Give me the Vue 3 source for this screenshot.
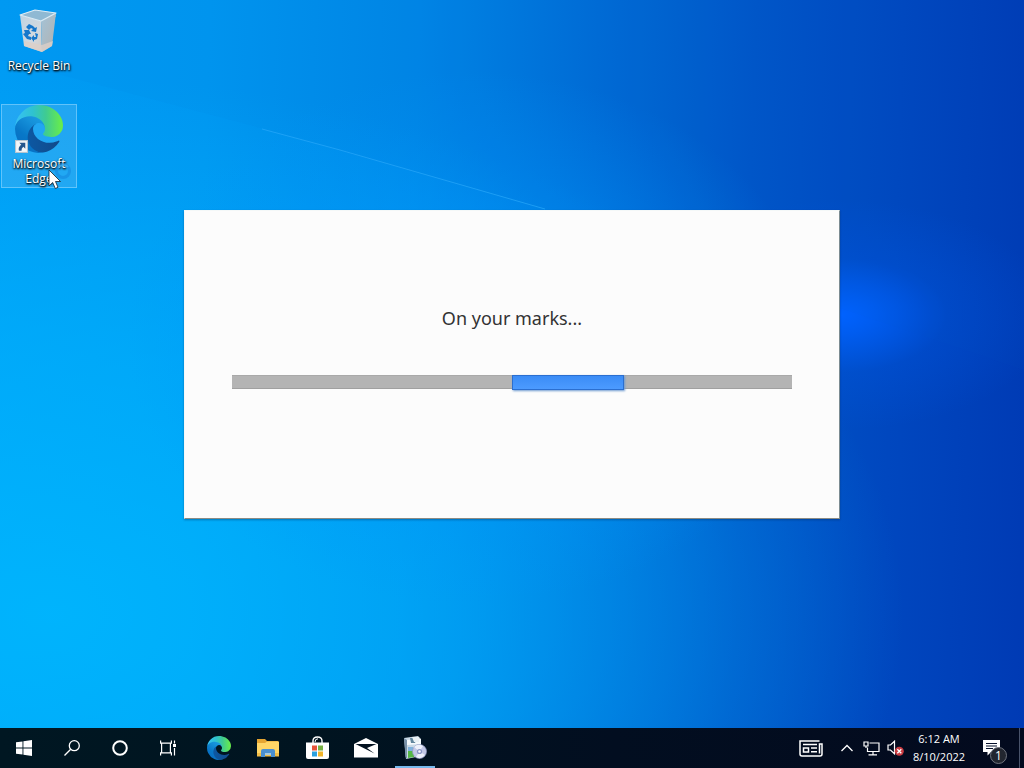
<script setup>
import { ref } from 'vue'

const message = ref('On your marks...')
const offset = ref(50)
</script>

<template>
  <div class="desktop">
    <svg class="beam" viewBox="0 0 1024 768" preserveAspectRatio="none" aria-hidden="true">
      <path class="shade" d="M80 80 L264 129 L545 209 L1024 370 V0 H0 V60 Z" />
      <path class="ray" d="M262 129 L340 150 L545 209" />
    </svg>

    <main class="workspace">
      <nav class="shortcuts" aria-label="Desktop">
        <button class="shortcut" type="button">
          <svg class="pic" viewBox="0 0 48 48" aria-hidden="true">
            <defs>
              <linearGradient id="bin-front" x1="0" y1="0" x2="1" y2="1">
                <stop offset="0" stop-color="#bdd3e2" /><stop offset=".6" stop-color="#d3d9df" /><stop offset="1" stop-color="#cfcac6" />
              </linearGradient>
              <linearGradient id="bin-side" x1="0" y1="0" x2="1" y2="1">
                <stop offset="0" stop-color="#a3c3d8" /><stop offset="1" stop-color="#b3b2b0" />
              </linearGradient>
            </defs>
            <path d="M5 8 L20 3 L41 6 L41 10 L26 14 Z" fill="#75b5dc" />
            <path d="M5 8 L26 14 L27 45 L9 39 Z" fill="url(#bin-front)" />
            <path d="M26 14 L41 6 L37 39 L27 45 Z" fill="url(#bin-side)" />
            <path d="M5 8 L20 3 L41 6 L26 14 Z" fill="#8fb9d3" stroke="#dcecf5" stroke-width="1.2" stroke-linejoin="round" />
            <path d="M9 34 L27 38 L38 34 L37 39 L27 45 L9 39 Z" fill="#dcd0c8" opacity=".8" />
            <g fill="#1677cb">
              <path d="M11 20 L14 17 L18 19 L20 21 L22 20 L21 25 L16 24 L18 22 L16 21 L14 23 Z" />
              <path d="M9 23 L14 23 L16 27 L14 27 L13 29 L16 30 V33 L12 32 L8 27 L10 26 Z" />
              <path d="M20 26 L23 27 L22 32 L19 33 V35 L16 31 L19 28 V30 L21 30 Z" />
            </g>
          </svg>
          <span class="label">Recycle Bin</span>
        </button>
        <button class="shortcut selected" type="button">
          <span class="pic-wrap">
            <svg class="pic" viewBox="0 0 256 256" aria-hidden="true">
              <defs>
                <linearGradient id="edge-deep" x1="63" y1="177" x2="241" y2="177" gradientUnits="userSpaceOnUse">
                  <stop offset="0" stop-color="#0c59a4" /><stop offset="1" stop-color="#114a8b" />
                </linearGradient>
                <linearGradient id="edge-mid" x1="157" y1="80" x2="46" y2="226" gradientUnits="userSpaceOnUse">
                  <stop offset="0" stop-color="#1b9de2" /><stop offset=".3" stop-color="#1590d9" /><stop offset=".7" stop-color="#0878c8" /><stop offset="1" stop-color="#0870c4" />
                </linearGradient>
                <linearGradient id="edge-top" x1="20" y1="90" x2="250" y2="90" gradientUnits="userSpaceOnUse">
                  <stop offset="0" stop-color="#35c1f1" /><stop offset=".35" stop-color="#2fc2cf" /><stop offset=".65" stop-color="#3fcb91" /><stop offset="1" stop-color="#66eb4e" />
                </linearGradient>
                <symbol id="edge" viewBox="0 0 256 256">
                  <g transform="translate(-4.63 -4.92)">
                    <path fill="url(#edge-deep)" d="M235.68 195.46a93.73 93.73 0 01-10.54 4.71 101.87 101.87 0 01-35.9 6.46c-47.32 0-88.54-32.55-88.54-74.32A31.48 31.48 0 01117.13 105c-42.8 1.8-53.8 46.4-53.8 72.53 0 73.88 68.09 81.37 82.76 81.37 7.91 0 19.84-2.3 27-4.56l1.31-.44a128.34 128.34 0 0066.6-52.8 4 4 0 00-5.32-5.64z" />
                    <path fill="url(#edge-mid)" d="M110.34 246.34A79.2 79.2 0 0187.6 225a80.72 80.72 0 0129.53-120c3.12-1.47 8.45-4.13 15.54-4a32.35 32.35 0 0125.69 13 31.88 31.88 0 016.36 18.66c0-.21 24.46-79.6-80-79.6-43.9 0-80 41.66-80 78.21a130.15 130.15 0 0012.11 56 128 128 0 00156.38 67.11 75.55 75.55 0 01-62.78-8z" />
                    <path fill="url(#edge-top)" d="M156.94 153.78c-.81 1.05-3.3 2.5-3.3 5.66 0 2.61 1.7 5.12 4.72 7.23 14.38 10 41.49 8.68 41.56 8.68a59.56 59.56 0 0030.27-8.35A61.38 61.38 0 00260.62 114c.26-22.41-8-37.31-11.34-43.91C228.09 28.76 182.35 4.92 132.61 4.92a128 128 0 00-128 126.2c.48-36.54 36.8-66.05 80-66.05 3.5 0 23.46.34 42 10.07 16.34 8.58 24.9 18.94 30.85 29.21 6.18 10.67 7.28 24.15 7.28 29.52s-2.74 13.33-7.8 19.91z" />
                  </g>
                </symbol>
              </defs>
              <use href="#edge" />
            </svg>
            <svg class="link-mark" viewBox="0 0 12 12" aria-hidden="true">
              <rect x=".5" y=".5" width="11" height="11" fill="#f4f6f8" stroke="#b5c4d0" />
              <path d="M4 2.5 H9.5 V8 L7.7 6.3 Q5.8 7.5 6 10 H3.6 Q2.6 6.5 5.8 4.3 Z" fill="#24558c" />
            </svg>
          </span>
          <span class="label">Microsoft Edge</span>
        </button>
      </nav>

      <section class="splash" role="dialog" aria-labelledby="status">
        <p id="status" class="status">{{ message }}</p>
        <div class="track" role="progressbar" aria-labelledby="status">
          <div class="chunk" :style="{ marginLeft: offset + '%' }"></div>
        </div>
      </section>
    </main>

    <footer class="taskbar">
      <button class="task" type="button" aria-label="Start">
        <svg width="16" height="16" viewBox="0 0 16 16" fill="#fff"><path d="M0 2.3 L6.5 1.4 V7.5 H0Z M7.4 1.2 L16 0 V7.5 H7.4Z M0 8.4 H6.5 V14.6 L0 13.7Z M7.4 8.4 H16 V16 L7.4 14.8Z" /></svg>
      </button>
      <button class="task" type="button" aria-label="Search">
        <svg width="16" height="16" viewBox="0 0 16 16" fill="none" stroke="#fff" stroke-width="1.3"><circle cx="10.3" cy="5.7" r="5" /><path d="M6.7 9.3 L.5 15.5" /></svg>
      </button>
      <button class="task" type="button" aria-label="Cortana">
        <svg width="16" height="16" viewBox="0 0 16 16" fill="none" stroke="#fff" stroke-width="2"><circle cx="8" cy="8" r="6.8" /></svg>
      </button>
      <button class="task" type="button" aria-label="Task View">
        <svg width="16" height="16" viewBox="0 0 16 16" fill="none" stroke="#fff" stroke-width="1.2"><path d="M.6 .5 V3.2 H11.4 V.5 M.6 15.5 V12.8 H11.4 V15.5 M1.6 3.2 V12.8 M10.4 3.2 V12.8 M14.5 .5 V3.5 M14.5 8 V15.5" /><path d="M13 4 H16 V7 H13Z" fill="#fff" stroke="none" /></svg>
      </button>
      <div class="pinned">
        <button class="task" type="button" aria-label="Microsoft Edge">
          <svg width="24" height="24" viewBox="0 0 256 256"><use href="#edge" /></svg>
        </button>
        <button class="task" type="button" aria-label="File Explorer">
          <svg width="22" height="18" viewBox="0 0 22 18"><path d="M0 0 H8 L10 2 H21 V17 H0Z" fill="#e5a532" /><path d="M0 4 H8 L10 2.5 H22 V17 H0Z" fill="#ffd566" /><path d="M0 14 H22 V17.5 H0Z" fill="#f3bd47" /><path d="M4 18 V12 Q4 10 6 10 H16 Q18 10 18 12 V18 H14 V14 H8 V18Z" fill="#4a8fd0" /><path d="M8 14 H14 V16 H8Z" fill="#a7c9dd" /></svg>
        </button>
        <button class="task" type="button" aria-label="Microsoft Store">
          <svg width="23" height="24" viewBox="0 0 23 24"><path d="M7 7 V5 Q7 1 11.5 1 Q16 1 16 5 V7" fill="none" stroke="#fff" stroke-width="1.4" /><path d="M9 6 Q9 2.8 12 2.8" fill="none" stroke="#fff" /><path d="M0 6.5 H23 V21 Q23 23 21 23 H2 Q0 23 0 21Z" fill="#fff" /><path d="M6 9.5 H11 V14.5 H6Z" fill="#e5533a" /><path d="M12 9.5 H17 V14.5 H12Z" fill="#76b043" /><path d="M6 15.5 H11 V20.5 H6Z" fill="#2ba0de" /><path d="M12 15.5 H17 V20.5 H12Z" fill="#f2b52a" /></svg>
        </button>
        <button class="task" type="button" aria-label="Mail">
          <svg width="24" height="20" viewBox="0 0 24 20"><path d="M0 6 L12 0 L24 6 V19.5 H0Z" fill="#fff" /><path d="M1.5 6 H22.5 L13 10 L20.5 15.5 Z" fill="#02111f" /></svg>
        </button>
        <button class="task active" type="button" aria-label="Setup">
          <svg width="24" height="24" viewBox="0 0 24 24"><path d="M1 2 L15 0 L18 3 V20 L3 23 Z" fill="#cad9e6" /><path d="M1 2 L4 4 V23 L2.5 21 Z" fill="#7992a9" /><path d="M4 4 L18 3 V8 L4 9Z" fill="#f5f9fc" /><path d="M7 2 H14 L12 7 H8Z" fill="#62869d" /><path d="M9 1 H16 V6 H11Z" fill="#e8f0f5" /><path d="M5 11 H10 V15 H5Z" fill="#7fb2dd" /><path d="M5 15 H11 V21 L5 22Z" fill="#55b746" /><circle cx="16.5" cy="15.5" r="7" fill="#c3c8e6" stroke="#8e97c0" stroke-width=".7" /><path d="M16.5 15.5 L11 11 Q15 7 20 10Z M16.5 15.5 L22 19 Q18 24 13 21Z" fill="#edf0fb" /><circle cx="16.5" cy="15.5" r="2.6" fill="#8995c5" /><circle cx="16.5" cy="15.5" r="1.3" fill="#f7f8ff" /></svg>
        </button>
      </div>

      <div class="tray">
        <button class="news" type="button" aria-label="News and interests">
          <svg width="24" height="17" viewBox="0 0 24 17" fill="none" stroke="#fff" stroke-width="1.5"><path d="M20.5 1 H1 V14 Q1 16 3 16 H21 Q23 16 23 14 V4 H20.5 V13.5" /><path d="M4 4.5 H18 M12 8 H18 M12 11.8 H18 M4.5 8 H9.5 V12 H4.5Z" /></svg>
        </button>
        <button class="small" type="button" aria-label="Show hidden icons">
          <svg width="12" height="8" viewBox="0 0 12 8" fill="none" stroke="#fff" stroke-width="1.3"><path d="M.5 7 L6 1.5 L11.5 7" /></svg>
        </button>
        <button class="small" type="button" aria-label="Network">
          <svg width="17" height="15" viewBox="0 0 17 15" fill="none" stroke="#fff" stroke-width="1.2"><path d="M6.5 2 H16 V10.5 H4.5 V6.5 M10 10.5 V13.5 M5.5 13.8 H14" /><path d="M1 1 H5 V5 H1Z M3 5 V7" /></svg>
        </button>
        <button class="small" type="button" aria-label="Volume muted">
          <svg width="17" height="16" viewBox="0 0 17 16"><path d="M1 5 H3.5 L7.5 1.2 V13.8 L3.5 10 H1Z" fill="none" stroke="#fff" stroke-width="1.2" /><circle cx="12.3" cy="11.3" r="4.5" fill="#c93c42" /><path d="M10.3 9.3 L14.3 13.3 M14.3 9.3 L10.3 13.3" stroke="#fff" stroke-width="1.3" /></svg>
        </button>
        <button class="clock" type="button">
          <time>6:12 AM</time>
          <time datetime="2022-08-10">8/10/2022</time>
        </button>
        <button class="notices" type="button" aria-label="Notifications: 1 new">
          <svg width="17" height="16" viewBox="0 0 17 16"><path d="M0 0 H17 V12 H8 L4.5 15.5 V12 H0Z" fill="#fff" /><path d="M3 3.5 H14 M3 6 H14 M3 8.5 H10" stroke="#07122c" stroke-width="1.1" /></svg>
          <span class="badge">1</span>
        </button>
        <button class="peek" type="button" aria-label="Show desktop"></button>
      </div>
    </footer>

    <svg class="pointer" viewBox="0 0 25 32" aria-hidden="true">
      <circle cx="15" cy="10" r="6.5" fill="none" stroke="#168be0" stroke-width="3" opacity=".65" />
      <path d="M10 7 A6.5 6.5 0 0 1 20 6" fill="none" stroke="#48b8f5" stroke-width="2" opacity=".6" />
      <path d="M1 9 V25 L4.7 21.5 L7.3 27.5 L10 26.3 L7.5 20.5 H12.5 Z" fill="#fff" stroke="#14202c" stroke-width=".8" />
    </svg>
  </div>
</template>

<style>
body {
  margin: 0;
}
</style>

<style scoped>
.desktop {
  position: relative;
  display: flex;
  flex-direction: column;
  min-height: 100vh;
  overflow: hidden;
  font-family: "Open Sans", "Noto Sans", sans-serif;
  background:
    radial-gradient(ellipse at 82% 41%, #0062ff 0, rgba(0, 98, 255, 0.75) 3%, rgba(0, 90, 235, 0.25) 9%, rgba(0, 90, 235, 0) 18%),
    radial-gradient(ellipse at 46% 44%, rgba(0, 160, 255, 0.9) 0, rgba(0, 150, 250, 0.45) 20%, rgba(0, 140, 245, 0) 44%),
    radial-gradient(ellipse at 5% 80%, rgba(0, 186, 255, 0.8) 0, rgba(0, 182, 255, 0.55) 30%, rgba(0, 170, 255, 0) 62%),
    linear-gradient(92deg, #009cf4 0%, #0096f0 20%, #0086e6 40%, #006cd6 57%, #0056c8 72%, #0047bf 86%, #003ab4 100%);
}

.beam {
  position: absolute;
  inset: 0;
  width: 100%;
  height: 100%;
}

.shade {
  fill: #0064d0;
  opacity: 0.04;
}

.ray {
  fill: none;
  stroke: #28a8fa;
  stroke-width: 1;
  opacity: 0.7;
}

button {
  padding: 0;
  border: 0;
  background: none;
  color: #fff;
  font: inherit;
}

.workspace {
  position: relative;
  display: grid;
  flex: 1;
}

.shortcuts,
.splash {
  grid-area: 1 / 1;
}

.shortcuts {
  display: flex;
  flex-direction: column;
  align-items: flex-start;
  gap: 16px;
  padding: 4px 1px;
}

.shortcut {
  display: flex;
  flex-direction: column;
  align-items: center;
  box-sizing: border-box;
  width: 76px;
  min-height: 84px;
  padding-top: 2px;
  border: 1px solid transparent;
}

.selected {
  padding-top: 0;
  border-color: rgba(130, 210, 255, 0.65);
  background: rgba(110, 190, 240, 0.3);
}

.pic-wrap {
  position: relative;
  display: flex;
}

.pic {
  width: 48px;
  height: 48px;
}

.link-mark {
  position: absolute;
  left: 0;
  bottom: 0;
  width: 13px;
  height: 13px;
}

.label {
  padding-top: 3px;
  font-size: 12px;
  line-height: 15px;
  text-align: center;
  text-shadow: 0 1px 2px #000, 1px 1px 2px #000;
}

.splash {
  place-self: center;
  box-sizing: border-box;
  width: 64%;
  padding: 93px 47px 129px;
  border: 1px solid #f4f8f8;
  border-right-color: #7c8c92;
  border-bottom-color: #8b8b84;
  background: #fcfcfc;
  box-shadow: 0 1px 2px rgba(0, 40, 90, 0.4);
}

.status {
  margin: 0 0 43px;
  color: #333;
  font-family: "Noto Sans", "Open Sans", sans-serif;
  font-size: 18px;
  line-height: 28px;
  text-align: center;
}

.track {
  display: flex;
  height: 14px;
  background: #b4b4b4;
  box-shadow: inset 0 -1px #a0a0a0, inset 0 1px #a9a9a9;
}

.chunk {
  box-sizing: border-box;
  width: 20%;
  height: 15px;
  border: 1px solid #2b6fd0;
  background: linear-gradient(#3b8cf6, #4c9bff);
  box-shadow: 1px 1px 2px #6f9bd0;
}

.taskbar {
  position: relative;
  display: flex;
  height: 40px;
  background: linear-gradient(90deg, #001722 0%, #001420 30%, #020e20 60%, #030a1e 100%);
}

.task {
  display: flex;
  align-items: center;
  justify-content: center;
  width: 48px;
  height: 40px;
}

.pinned {
  display: flex;
  gap: 1px;
  margin-left: 3px;
}

.active {
  background: linear-gradient(#76b9ed, #76b9ed) center bottom / 40px 2px no-repeat;
}

.tray {
  display: flex;
  align-items: center;
  margin-left: auto;
}

.news,
.small,
.notices {
  display: flex;
  align-items: center;
  justify-content: center;
  height: 40px;
}

.news {
  width: 48px;
}

.small {
  width: 24px;
}

.clock {
  display: flex;
  flex-direction: column;
  align-items: center;
  width: 64px;
  font-size: 11px;
  line-height: 18px;
}

.notices {
  position: relative;
  box-sizing: border-box;
  width: 48px;
  padding-right: 8px;
}

.badge {
  position: absolute;
  right: 12px;
  bottom: 4px;
  box-sizing: border-box;
  width: 17px;
  height: 17px;
  border: 1px solid #70747e;
  border-radius: 50%;
  background: #22262f;
  font-size: 12px;
  line-height: 15px;
  text-align: center;
}

.peek {
  width: 5px;
  height: 40px;
  border-left: 1px solid #49536a;
}

.pointer {
  position: absolute;
  left: 48px;
  top: 161px;
  width: 25px;
  height: 32px;
}
</style>
